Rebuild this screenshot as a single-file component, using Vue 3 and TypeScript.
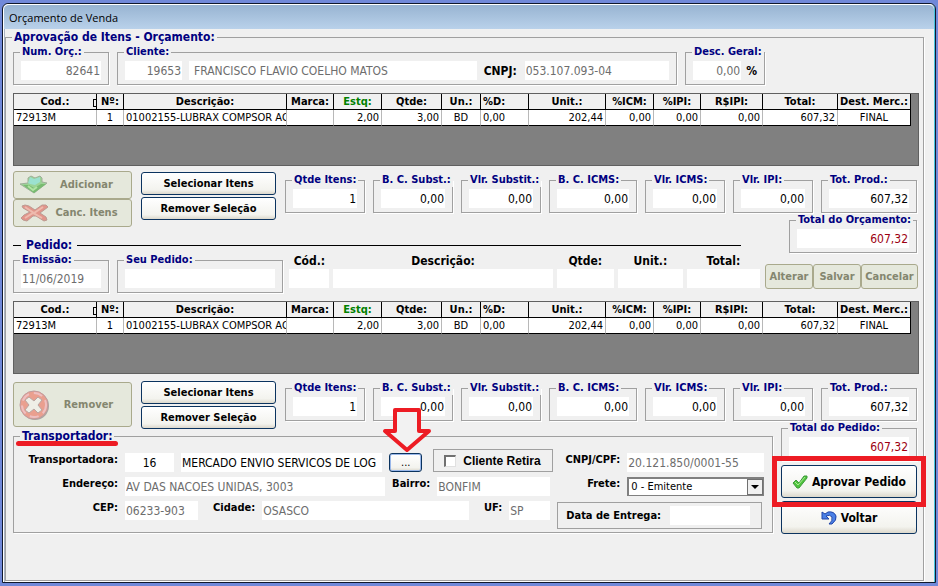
<script setup lang="ts">
import { ref } from 'vue'

interface Column { label: string; width: number; align: string; value: string }
interface Total { id: string; label: string; value: string }

const columns: Column[] = [
  { label: 'Cod.:', width: 83, align: 'left', value: '72913M' },
  { label: 'Nº:', width: 27, align: 'center', value: '1' },
  { label: 'Descrição:', width: 163, align: 'left', value: '01002155-LUBRAX COMPSOR AC' },
  { label: 'Marca:', width: 47, align: 'left', value: '' },
  { label: 'Estq:', width: 48, align: 'right', value: '2,00' },
  { label: 'Qtde:', width: 60, align: 'right', value: '3,00' },
  { label: 'Un.:', width: 39, align: 'center', value: 'BD' },
  { label: '%D:', width: 48, align: 'left', value: '0,00' },
  { label: 'Unit.:', width: 77, align: 'right', value: '202,44' },
  { label: '%ICM:', width: 48, align: 'right', value: '0,00' },
  { label: '%IPI:', width: 47, align: 'right', value: '0,00' },
  { label: 'R$IPI:', width: 62, align: 'right', value: '0,00' },
  { label: 'Total:', width: 75, align: 'right', value: '607,32' },
  { label: 'Dest. Merc.:', width: 73, align: 'center', value: 'FINAL' },
]

const totals: Total[] = [
  { id: 'qtde', label: 'Qtde Itens:', value: '1' },
  { id: 'bcsubst', label: 'B. C. Subst.:', value: '0,00' },
  { id: 'vlrsubst', label: 'Vlr. Substit.:', value: '0,00' },
  { id: 'bcicms', label: 'B. C. ICMS:', value: '0,00' },
  { id: 'vlricms', label: 'Vlr. ICMS:', value: '0,00' },
  { id: 'vlripi', label: 'Vlr. IPI:', value: '0,00' },
  { id: 'totprod', label: 'Tot. Prod.:', value: '607,32' },
]

const retira = ref(false)
const frete = ref('0 - Emitente')
</script>

<template>
  <main class="window">
    <header class="titlebar">Orçamento de Venda</header>
    <fieldset class="panel">
      <legend class="big">Aprovação de Itens - Orçamento:</legend>

      <div class="head-row">
        <fieldset class="box">
          <legend><label for="num">Num. Orç.:</label></legend>
          <input id="num" class="num" value="82641" disabled />
        </fieldset>
        <fieldset class="box">
          <legend><label for="cli">Cliente:</label></legend>
          <div class="client">
            <input id="cli" class="num" value="19653" disabled />
            <input class="inset" value="FRANCISCO FLAVIO COELHO MATOS" aria-label="Nome" disabled />
            <label for="cnpj">CNPJ:</label>
            <input id="cnpj" value="053.107.093-04" disabled />
          </div>
        </fieldset>
        <fieldset class="box">
          <legend><label for="desc">Desc. Geral:</label></legend>
          <div class="discount">
            <input id="desc" class="num" value="0,00" disabled />
            <span>%</span>
          </div>
        </fieldset>
      </div>

      <div class="grid-area">
        <table>
          <colgroup><col v-for="c in columns" :key="c.label" :style="{ width: c.width + 'px' }" /></colgroup>
          <thead>
            <tr><th v-for="c in columns" :key="c.label" :class="{ stock: c.label === 'Estq:', start: c.label === '%D:' }">{{ c.label }}</th></tr>
          </thead>
          <tbody>
            <tr><td v-for="c in columns" :key="c.label" :class="c.align">{{ c.value }}</td></tr>
          </tbody>
        </table>
      </div>

      <section class="middle">
        <div class="actions">
          <div class="stack">
            <button class="soft tall" disabled>
              <svg width="28" height="20" viewBox="0 0 28 20">
                <path d="M0 9l8-1 0-5 3-2 4 2 5-2 2 2 0 4 5 1-13 10z" fill="#8fd08a" stroke="#93a58f" />
                <path d="M8 8l2-6 4 2 6-2 0 5-5 3-5-1z" fill="#8fe0cd" />
                <path d="M3 10l6 0 5 3 7-4 5 0-12 9z" fill="#66b45e" />
                <path d="M8 11l5 4 4-3" fill="none" stroke="#a8e49a" stroke-width="2" />
              </svg>
              <span>Adicionar</span>
            </button>
            <button class="soft tall" disabled>
              <svg width="28" height="20" viewBox="0 0 28 20">
                <path d="M2 3l3-1 4 1 6 4 7-5 4 0 2 2-8 6 6 4 1 3-3 1-8-5-3 0-6 5-4-1-2-2 3-3 6-3-7-4z" fill="#e2877d" stroke="#b58e86" />
                <path d="M5 4l9 6 9-6M5 15l8-5 9 5" fill="none" stroke="#f0b3a6" stroke-width="2" />
              </svg>
              <span>Canc. Itens</span>
            </button>
          </div>
          <div class="stack choose">
            <button class="xp">Selecionar Itens</button>
            <button class="xp">Remover Seleção</button>
          </div>
        </div>
        <div class="totals">
          <fieldset v-for="t in totals" :key="t.id" class="box">
            <legend><label :for="'o-' + t.id">{{ t.label }}</label></legend>
            <input :id="'o-' + t.id" class="num" :value="t.value" />
          </fieldset>
        </div>
        <fieldset class="box grand">
          <legend><label for="tot-orc">Total do Orçamento:</label></legend>
          <input id="tot-orc" class="num red" value="607,32" />
        </fieldset>
        <h2 class="divider">Pedido:</h2>
      </section>

      <div class="order-row">
        <fieldset class="box">
          <legend><label for="emissao">Emissão:</label></legend>
          <input id="emissao" value="11/06/2019" disabled />
        </fieldset>
        <fieldset class="box">
          <legend><label for="seu">Seu Pedido:</label></legend>
          <input id="seu" />
        </fieldset>
        <div class="entry">
          <div><label for="e-cod">Cód.:</label><input id="e-cod" /></div>
          <div><label for="e-desc">Descrição:</label><input id="e-desc" /></div>
          <div><label for="e-qtde">Qtde:</label><input id="e-qtde" /></div>
          <div><label for="e-unit">Unit.:</label><input id="e-unit" /></div>
          <div><label for="e-total">Total:</label><input id="e-total" /></div>
        </div>
        <div class="edit">
          <button class="soft" disabled>Alterar</button>
          <button class="soft" disabled>Salvar</button>
          <button class="soft" disabled>Cancelar</button>
        </div>
      </div>

      <div class="grid-area">
        <table>
          <colgroup><col v-for="c in columns" :key="c.label" :style="{ width: c.width + 'px' }" /></colgroup>
          <thead>
            <tr><th v-for="c in columns" :key="c.label" :class="{ stock: c.label === 'Estq:', start: c.label === '%D:' }">{{ c.label }}</th></tr>
          </thead>
          <tbody>
            <tr><td v-for="c in columns" :key="c.label" :class="c.align">{{ c.value }}</td></tr>
          </tbody>
        </table>
      </div>

      <section class="lower">
        <div class="actions">
          <button class="soft remove" disabled>
            <svg width="32" height="32" viewBox="0 0 32 32">
              <circle cx="17" cy="17" r="14" fill="#a39a98" />
              <circle cx="16" cy="16" r="14" fill="#ec9382" stroke="#b98f95" stroke-width="1" />
              <circle cx="16" cy="16" r="12" fill="none" stroke="#f0b9bd" stroke-width="2" stroke-dasharray="9 5" />
              <path d="M11 8l5 4 4-4 4 3-4 5 4 5-4 3-4-4-5 4-4-3 4-5-4-5z" fill="#f1f0ea" stroke="#b39a98" />
            </svg>
            <span>Remover</span>
          </button>
          <div class="stack choose">
            <button class="xp">Selecionar Itens</button>
            <button class="xp">Remover Seleção</button>
          </div>
        </div>
        <div class="totals">
          <fieldset v-for="t in totals" :key="t.id" class="box">
            <legend><label :for="'p-' + t.id">{{ t.label }}</label></legend>
            <input :id="'p-' + t.id" class="num" :value="t.value" />
          </fieldset>
        </div>

        <fieldset class="carrier">
          <legend class="big">Transportador:<span class="underline"></span></legend>
          <div class="fields">
            <label for="tr">Transportadora:</label>
            <div class="line first">
              <input id="tr" class="code" value="16" />
              <input class="grow" value="MERCADO ENVIO SERVICOS DE LOG" aria-label="Nome da transportadora" />
              <span class="browse">
                <button class="xp focus">...</button>
                <svg class="arrow" width="52" height="46" viewBox="0 0 52 46">
                  <path d="M14 3H38V24H48L26 43 4 24H14Z" fill="#f2f2f2" stroke="#ed1c24" stroke-width="4" stroke-linejoin="round" />
                </svg>
              </span>
              <label class="check"><input v-model="retira" type="checkbox" />Cliente Retira</label>
            </div>
            <label for="cpf">CNPJ/CPF:</label>
            <input id="cpf" value="20.121.850/0001-55" disabled />

            <label for="end">Endereço:</label>
            <div class="line">
              <input id="end" class="grow" value="AV DAS NACOES UNIDAS, 3003" disabled />
              <label for="bai">Bairro:</label>
              <input id="bai" class="bairro" value="BONFIM" disabled />
            </div>
            <label for="frete">Frete:</label>
            <span class="combo">
              <select id="frete" v-model="frete"><option>0 - Emitente</option></select>
              <span class="drop"></span>
            </span>

            <label for="cep">CEP:</label>
            <div class="line">
              <input id="cep" class="cep" value="06233-903" disabled />
              <label for="cid" class="cidade">Cidade:</label>
              <input id="cid" class="grow" value="OSASCO" disabled />
              <label for="uf" class="uf-label">UF:</label>
              <input id="uf" class="uf" value="SP" disabled />
            </div>
            <div class="delivery">
              <label for="entrega">Data de Entrega:</label>
              <input id="entrega" />
            </div>
          </div>
        </fieldset>

        <div class="finish">
          <fieldset class="box">
            <legend><label for="tot-ped">Total do Pedido:</label></legend>
            <input id="tot-ped" class="num red" value="607,32" />
          </fieldset>
          <div class="approve">
            <button class="xp large">
              <svg width="16" height="16" viewBox="0 0 16 16">
                <path d="M1 9l3-3 3 3 5-7 3 0 0 2-8 10-2 0z" fill="#4fc43c" stroke="#3d9a3a" />
                <path d="M3 8l3 3 7-8" fill="none" stroke="#a9ec94" />
              </svg>
              Aprovar Pedido
            </button>
            <span class="mark"></span>
          </div>
          <button class="xp large">
            <svg width="16" height="16" viewBox="0 0 16 16">
              <path d="M1 2v7h7L5 6q4-2 6 1 1 4-3 7h3q5-4 4-8-2-5-8-4L4 4z" fill="#4a80e6" stroke="#2145a8" stroke-linejoin="round" />
            </svg>
            Voltar
          </button>
        </div>
      </section>
    </fieldset>
  </main>
</template>

<style>
body { background: #7189d9; }
</style>

<style scoped>
* { box-sizing: border-box; }
.window {
  margin: 3px 2px;
  padding: 0 11px 1px 2px;
  border: 1px solid #10182c;
  border-radius: 6px 6px 0 0;
  background: #f0f0f0;
  box-shadow: inset 1px 1px 0 #fff, inset -1px 0 0 #45c4dc, inset 2px 0 0 #aab4c4;
  font: bold 11px/14px "DejaVu Sans Condensed", "DejaVu Sans", sans-serif;
  color: #000;
}
.titlebar {
  margin: 0 -10px 0 -1px;
  padding: 2px 5px 0;
  height: 25px;
  border-top: 1px solid #fff;
  border-radius: 5px 5px 0 0;
  background: linear-gradient(#98b4d2, #b9d1ea);
  font: 11px/21px "Open Sans", "Noto Sans", sans-serif;
}
fieldset { margin: 0; min-width: 0; border: 1px solid #a0a0a0; box-shadow: 1px 1px 0 #fff; }
legend { padding: 0 2px; height: 14px; color: #000080; white-space: nowrap; }
.big { height: 16px; font-size: 12px; line-height: 16px; }
.panel { padding: 0 4px 46px 7px; }
.panel > .big { padding: 0 2px; margin-left: -1px; }
.box { padding: 2px 7px 4px; }
.box legend { margin-left: -1px; }
input, select, button { font: inherit; margin: 0; min-width: 0; }
input {
  width: 100%;
  height: 19px;
  padding: 0 1px;
  border: 0;
  border-radius: 0;
  background: #fff;
  color: #000;
  font-size: 12px;
  font-weight: normal;
  display: block;
}
input:disabled { color: #6d6d6d; }
.num { text-align: right; }
.num.red { color: #9c0010; }

.head-row { display: grid; grid-template-columns: 96fr 560fr 80fr 146fr; gap: 8px; }
.client { display: grid; grid-template-columns: 57px 289fr 34px 145fr; column-gap: 7px; align-items: center; }
.client .inset { padding-left: 5px; }
.client label { font-size: 12px; }
.discount { display: flex; gap: 5px; align-items: center; }
.discount span { font-size: 12px; }

.grid-area { margin-top: 8px; height: 73px; border: 1px solid #606060; background: #808080; }
table { width: calc(100% - 8px); table-layout: fixed; border-collapse: separate; border-spacing: 0; }
th, td { height: 16px; padding: 0 2px; overflow: hidden; white-space: nowrap; line-height: 15px; border-bottom: 1px solid #000; }
th { background: #f0f0f0; border-right: 1px solid #000; text-align: center; }
th:first-child { position: relative; }
th:first-child::after { content: ""; position: absolute; right: 0; top: 5px; width: 2px; height: 6px; border: 1px solid #000; border-right: 0; }
td { background: #fff; border-right: 1px solid #b8b8b8; font-weight: normal; text-align: left; }
td.left { padding-right: 0; }
td:last-child { border-right-color: #000; }
th.stock { color: #008000; }
th.start { text-align: left; }
td.right { text-align: right; }
td.center { text-align: center; }

button { display: flex; align-items: center; justify-content: center; white-space: nowrap; padding: 1px 0 0; color: #000; }
.soft { border: 1px solid #a9a98c; border-radius: 3px; background: #e5e8dc; color: #84866f; height: 25px; }
.xp { height: 23px; border: 1px solid #0b335f; border-radius: 3px; background: linear-gradient(#fff, #f3f3ee 80%, #dcd8cc); }
.xp.focus { width: 33px; height: 19px; padding: 0; box-shadow: inset 0 0 0 1px #9ab8ea; font-weight: normal; }
.xp.large { width: 100%; height: 33px; gap: 4px; font-size: 12px; }
.soft svg { opacity: 0.85; }

.middle { display: grid; grid-template-columns: 272px 1fr 128px; grid-template-rows: auto 24px auto; margin-top: 5px; padding-right: 2px; }
.actions { display: grid; grid-template-columns: 119px 135px; column-gap: 9px; align-items: start; }
.middle .actions { grid-area: 1 / 1 / 3 / 2; }
.stack { display: grid; }
.choose { gap: 2px; padding-top: 1px; }
.tall { height: 28px; padding: 0 6px; }
.tall span, .remove span { flex: 1; text-align: center; }
.totals { display: grid; grid-template-columns: 80fr 80fr 80fr 88fr 80fr 80fr 96fr; gap: 8px; padding-top: 2px; }
.middle .totals { grid-area: 1 / 2 / 2 / 4; }
.grand { grid-area: 2 / 3 / 4 / 4; align-self: end; }
.divider { grid-area: 3 / 1 / 4 / 3; display: flex; align-items: center; gap: 5px; margin: 0 48px 0 0; font-size: 12px; line-height: 16px; color: #000080; }
.divider::before { content: ""; width: 8px; border-top: 1px solid #000; }
.divider::after { content: ""; flex: 1; border-top: 1px solid #000; }

.order-row { display: grid; grid-template-columns: 96px 168fr 470fr 153px; column-gap: 8px; padding-right: 1px; }
.entry { display: grid; grid-template-columns: 40fr 219fr 57fr 65fr 73fr; gap: 4px; margin: 0 -3px 0 -2px; }
.entry label { display: block; text-align: center; font-size: 12px; line-height: 16px; }
.edit { display: grid; grid-template-columns: 48px 48px 57px; padding-top: 11px; }
.edit .soft { font-size: 11px; }

.lower { display: grid; grid-template-columns: 272px 1fr 136px; padding: 7px 2px 0 0; }
.lower .totals { grid-column: 2 / 4; padding-top: 0; align-self: start; }
.lower .choose { padding-top: 0; }
.lower .actions { height: 40px; }
.remove { height: 45px; margin-top: 1px; padding: 0 4px; }
.carrier { grid-column: 1 / 3; margin: 7px 8px 0 0; padding: 9px 8px 3px; align-self: start; }
.carrier > .big { position: relative; margin-left: -2px; }
.underline { position: absolute; left: -4px; right: -4px; top: 13px; height: 5px; border-radius: 3px; background: #ed1c24; }
.fields { display: grid; grid-template-columns: 96px 426fr 63px 137fr; column-gap: 7px; row-gap: 5px; align-items: start; }
.fields > label { text-align: right; }
.line { display: flex; align-items: start; gap: 7px; }
.line.first { margin-right: -3px; }
.grow { flex: 1; }
.code { width: 49px; text-align: center; }
.browse { position: relative; }
.arrow { position: absolute; left: -8px; bottom: 19px; }
.check { display: flex; align-items: center; gap: 7px; width: 120px; height: 23px; margin: -4px 0 0 4px; padding-left: 10px; border: 1px solid #a0a0a0; font: bold 12px/14px "Liberation Sans", sans-serif; }
.check input { appearance: none; width: 12px; height: 12px; border: 1px solid #e0e0e0; border-top: 2px solid #707070; border-left: 2px solid #707070; }
.bairro { width: 113px; }
.cep { width: 73px; }
.cidade, .uf-label { padding-left: 8px; }
.uf { width: 41px; }
.combo { position: relative; }
select { display: block; appearance: none; width: 100%; height: 19px; padding: 0 2px; border: 1px solid #808080; border-top-width: 2px; border-left-width: 2px; border-radius: 0; background: #fff; font-weight: normal; }
.drop { position: absolute; top: 2px; right: 1px; width: 16px; height: 16px; border: 1px solid #707070; background: #f0f0f0; pointer-events: none; }
.drop::after { content: ""; position: absolute; left: 3px; top: 5px; border: 4px solid transparent; border-top-color: #000; }
.delivery { grid-column: 3 / 5; display: flex; align-items: center; gap: 9px; height: 27px; margin: 1px 2px 0 0; padding: 0 11px 0 8px; border: 1px solid #a0a0a0; white-space: nowrap; }
.finish { display: grid; row-gap: 3px; align-content: start; }
.finish .box { margin-bottom: 1px; }
.approve { position: relative; }
.mark { position: absolute; inset: -9px; border: 5px solid #ed1c24; pointer-events: none; }
</style>
